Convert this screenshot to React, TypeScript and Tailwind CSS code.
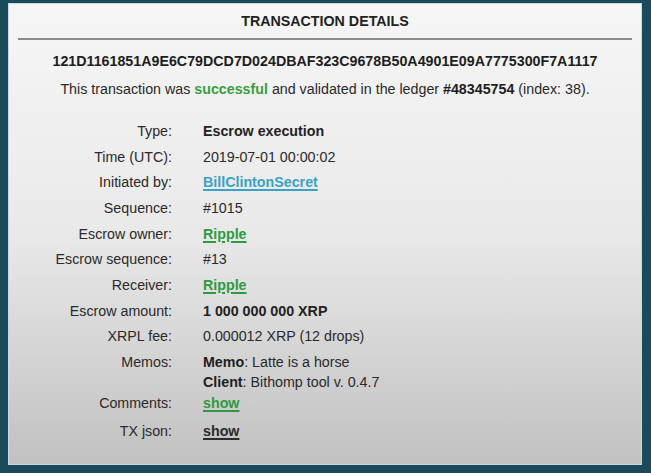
import React from "react";

const rows: { label: string; value: React.ReactNode }[] = [
  { label: "Type:", value: <span className="font-bold text-[#222]">Escrow execution</span> },
  { label: "Time (UTC):", value: "2019-07-01 00:00:02" },
  {
    label: "Initiated by:",
    value: (
      <span className="font-bold text-[#3aa2c4] underline decoration-[1.5px] underline-offset-[2px]">
        BillClintonSecret
      </span>
    ),
  },
  { label: "Sequence:", value: "#1015" },
  {
    label: "Escrow owner:",
    value: (
      <span className="font-bold text-[#2e9a3f] underline decoration-[1.5px] underline-offset-[2px]">Ripple</span>
    ),
  },
  { label: "Escrow sequence:", value: "#13" },
  {
    label: "Receiver:",
    value: (
      <span className="font-bold text-[#2e9a3f] underline decoration-[1.5px] underline-offset-[2px]">Ripple</span>
    ),
  },
  { label: "Escrow amount:", value: <span className="font-bold text-[#222]">1 000 000 000 XRP</span> },
  { label: "XRPL fee:", value: "0.000012 XRP (12 drops)" },
];

export default function App() {
  return (
    <div className="w-[651px] h-[473px] bg-[#1b4a5d] pt-[3px] pl-[8px] font-['Liberation_Sans',Arial,sans-serif] text-[14.25px] text-[#2a2a2a]">
      <div className="w-[634px] h-[462px] border border-[#c8d9df] bg-linear-to-b from-[#f6f6f6] via-[#e9e9e9] to-[#c1c1c1] flex flex-col">
        <div className="pt-[7px] leading-[20px] text-center font-bold text-[#222]">TRANSACTION DETAILS</div>
        <div className="mt-[7px] mx-[9px] h-[2px] bg-[#8c8c8c]" />
        <div className="mt-[10.5px] leading-[20px] text-center font-bold text-[#1e1e1e]">
          121D1161851A9E6C79DCD7D024DBAF323C9678B50A4901E09A7775300F7A1117
        </div>
        <div className="mt-[8.6px] leading-[20px] text-center">
          This transaction was <span className="font-bold text-[#3a9e3e]">successful</span> and validated in the
          ledger <span className="font-bold text-[#1e1e1e]">#48345754</span> (index: 38).
        </div>
        <div className="mt-[19px] grid grid-cols-[163px_1fr] leading-[20px]">
          {rows.map((r) => (
            <React.Fragment key={r.label}>
              <div className="h-[25.7px] flex items-center justify-end">{r.label}</div>
              <div className="h-[25.7px] flex items-center pl-[31px]">{r.value}</div>
            </React.Fragment>
          ))}
          <div className="h-[40.6px] pt-[3px] text-right">Memos:</div>
          <div className="h-[40.6px] pt-[3px] pl-[31px] flex flex-col">
            <div>
              <span className="font-bold text-[#1e1e1e]">Memo</span>: Latte is a horse
            </div>
            <div>
              <span className="font-bold text-[#1e1e1e]">Client</span>: Bithomp tool v. 0.4.7
            </div>
          </div>
          <div className="h-[25.7px] flex items-center justify-end">Comments:</div>
          <div className="h-[25.7px] flex items-center pl-[31px]">
            <span className="font-bold text-[#2e9a3f] underline decoration-[1.5px] underline-offset-[2px]">show</span>
          </div>
          <div className="h-[28px] pt-[2px] flex items-center justify-end">TX json:</div>
          <div className="h-[28px] pt-[2px] flex items-center pl-[31px]">
            <span className="font-bold text-[#2a2a2a] underline decoration-[1.5px] underline-offset-[2px]">show</span>
          </div>
        </div>
      </div>
    </div>
  );
}
